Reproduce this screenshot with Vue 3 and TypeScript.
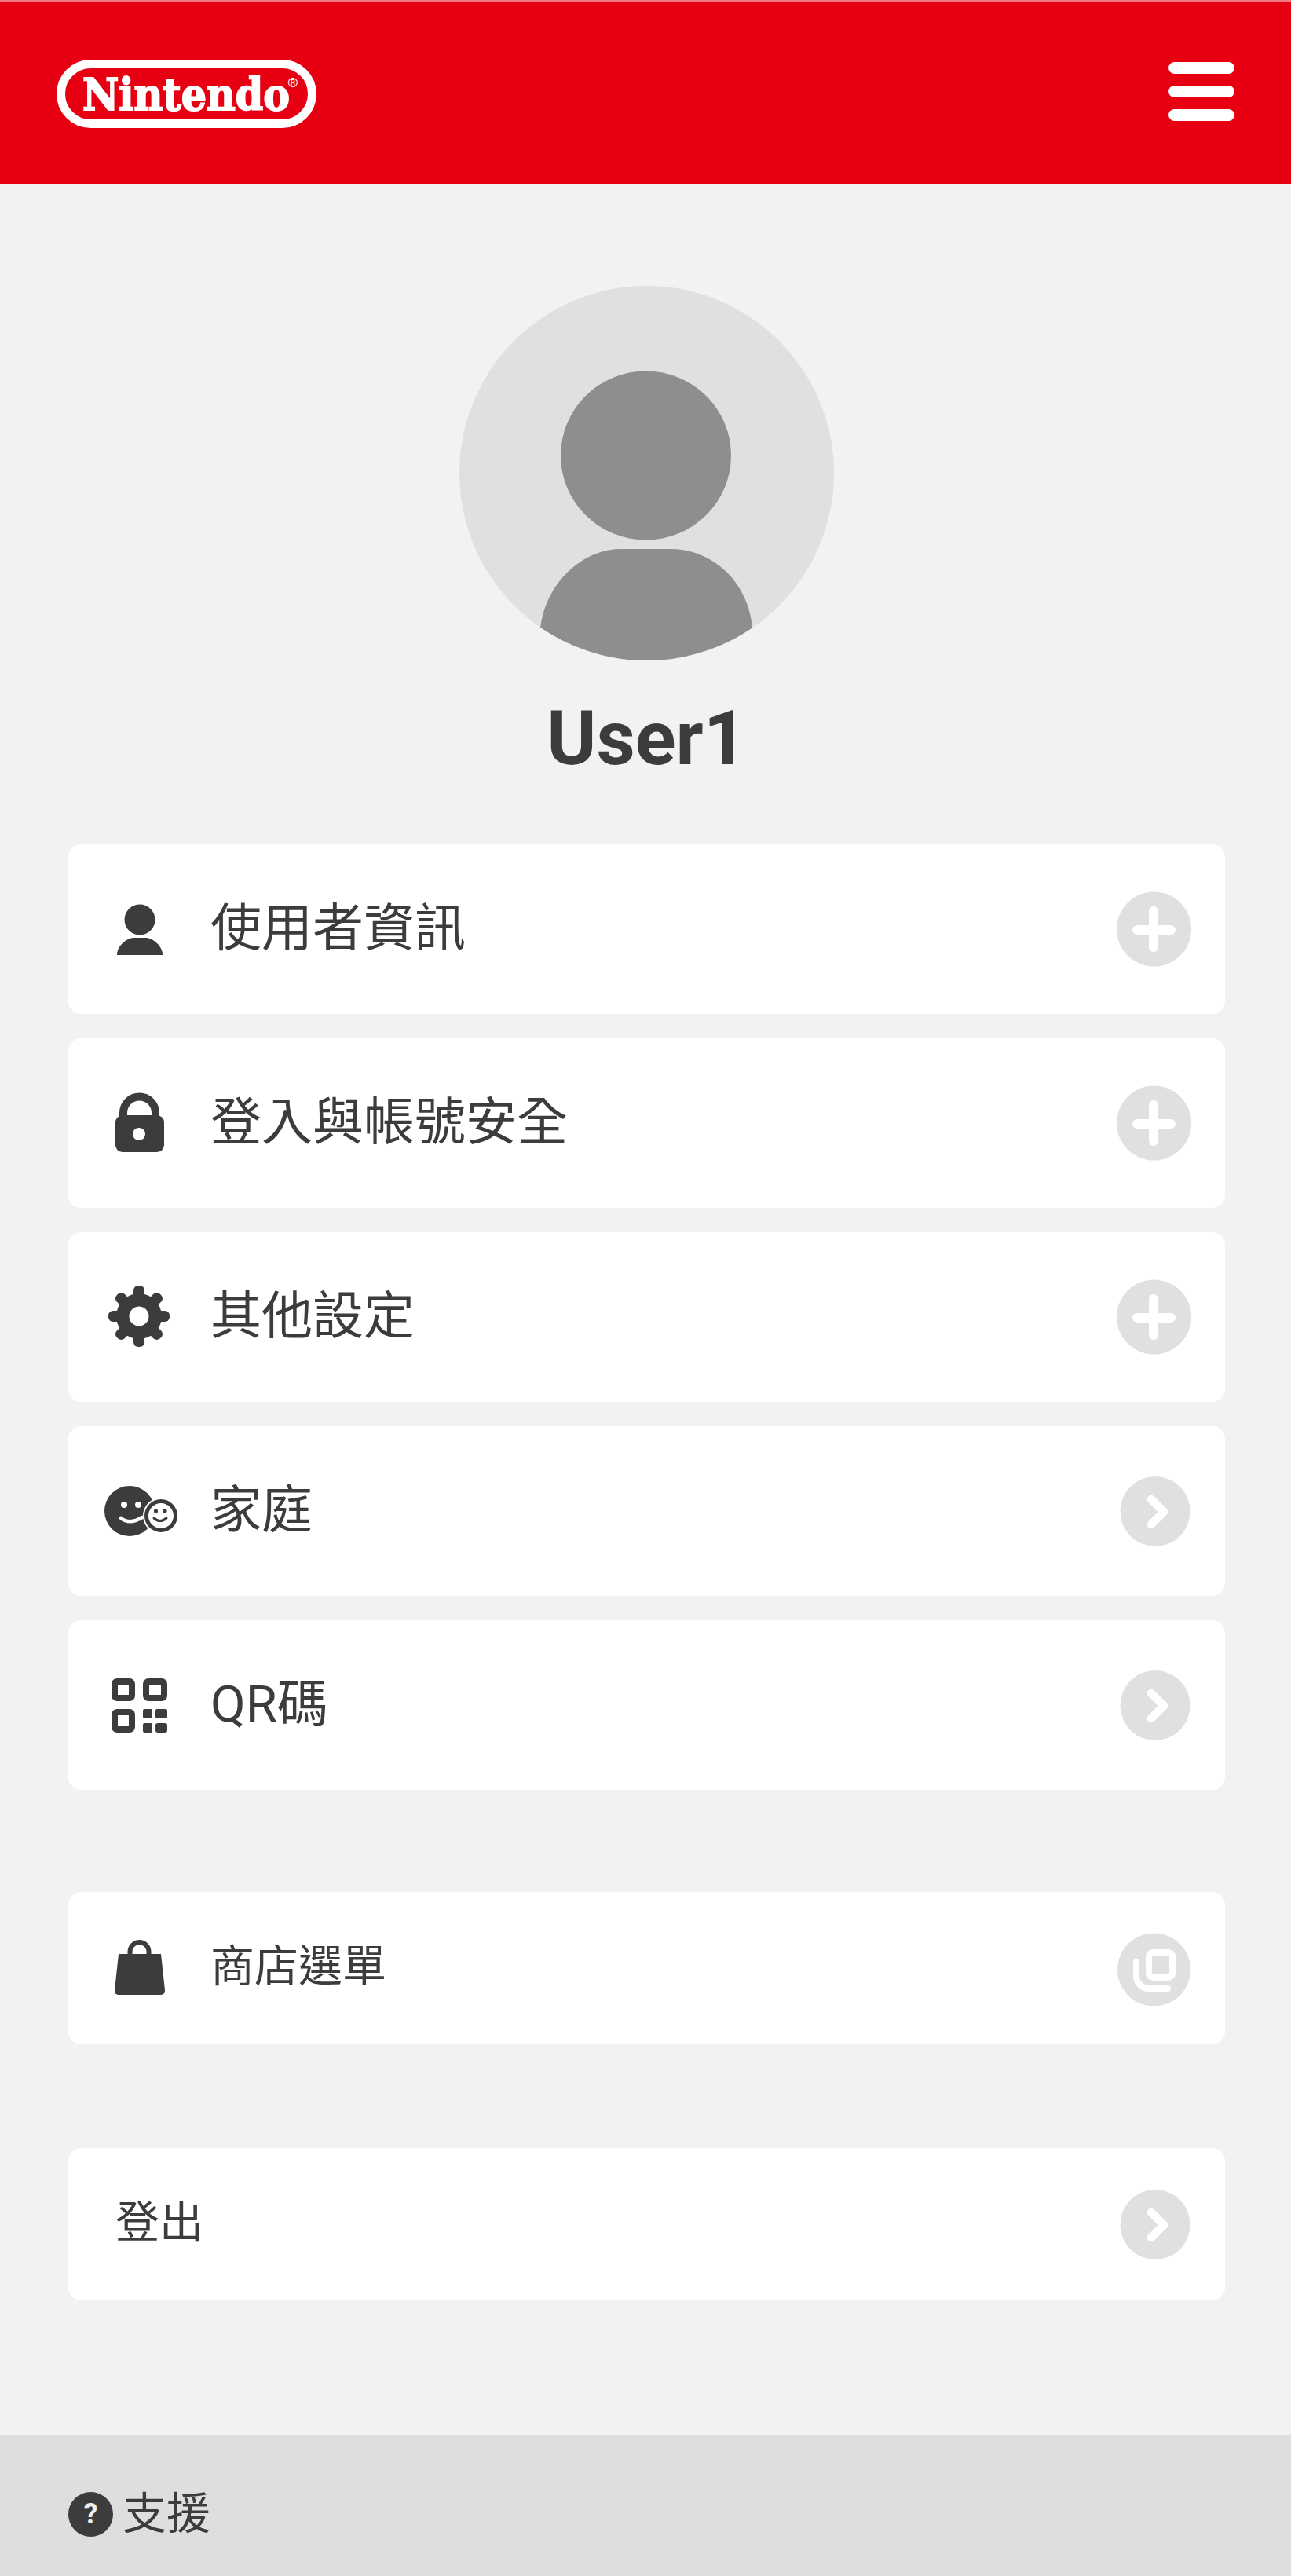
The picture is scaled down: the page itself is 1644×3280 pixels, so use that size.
<script setup lang="ts">
type Row = { label: string; icon?: string; trail: "plus" | "arrow" | "copy"; small?: boolean };

const mainRows: Row[] = [
  { label: "使用者資訊", icon: "person", trail: "plus" },
  { label: "登入與帳號安全", icon: "lock", trail: "plus" },
  { label: "其他設定", icon: "gear", trail: "plus" },
  { label: "家庭", icon: "family", trail: "arrow" },
  { label: "QR碼", icon: "qr", trail: "arrow" },
];
const shopRow: Row = { label: "商店選單", icon: "bag", trail: "copy", small: true };
const logoutRow: Row = { label: "登出", trail: "arrow", small: true };
const groups: Row[][] = [mainRows, [shopRow], [logoutRow]];

const gearAngles = [0, 45, 90, 135, 180, 225, 270, 315];
</script>

<template>
  <div class="page">
    <header class="top">
      <svg class="logo" viewBox="0 0 331 87" width="331" height="87" aria-label="Nintendo">
        <rect x="5.5" y="5.5" width="320" height="76" rx="38" fill="none" stroke="#fff" stroke-width="11" />
        <text x="33" y="64" class="logo-word" textLength="264" lengthAdjust="spacingAndGlyphs">Nintendo</text>
        <text x="301" y="35" class="logo-r" text-anchor="middle">®</text>
      </svg>
      <div class="burger"><span></span><span></span><span></span></div>
    </header>

    <main class="content">
      <svg class="avatar" viewBox="0 0 477 477" width="477" height="477">
        <defs>
          <clipPath id="avatar-clip"><circle cx="238.5" cy="238.5" r="238.5" /></clipPath>
        </defs>
        <circle cx="238.5" cy="238.5" r="238.5" fill="#e0e0e0" />
        <g clip-path="url(#avatar-clip)" fill="#8e8e8e">
          <ellipse cx="237.5" cy="216" rx="108.5" ry="107.5" />
          <path d="M100 500 L103 436 C110 375 160 335 205 335 L270 335 C320 335 368 375 373 436 L376 500 Z" />
        </g>
      </svg>
      <h1 class="name">User1</h1>

      <div v-for="(group, i) in groups" :key="i" class="group">
        <a v-for="row in group" :key="row.label" class="card" :class="{ small: row.small, bare: !row.icon }">
          <svg v-if="row.icon" class="lead" viewBox="0 0 120 96" width="120" height="96">
            <g v-if="row.icon === 'person'" fill="#3c3c3c">
              <circle cx="60" cy="36" r="19.5" />
              <path d="M31 81 C31 68 45 59 52 59 H68 C75 59 89 68 89 81 Z" />
            </g>
            <g v-else-if="row.icon === 'lock'">
              <path d="M39 40 V35 a20.5 20.5 0 0 1 41 0 V40" fill="none" stroke="#3c3c3c" stroke-width="10" />
              <rect x="29" y="38" width="62" height="47" rx="9" fill="#3c3c3c" />
              <circle cx="59" cy="62" r="8" fill="#fff" />
            </g>
            <g v-else-if="row.icon === 'gear'" fill="#3c3c3c">
              <rect
                v-for="a in gearAngles"
                :key="a"
                x="52"
                y="8"
                width="14"
                height="24"
                rx="6"
                :transform="`rotate(${a} 59 47)`"
              />
              <circle cx="59" cy="47" r="29" />
              <circle cx="59" cy="47" r="12.5" fill="#fff" />
            </g>
            <g v-else-if="row.icon === 'family'">
              <circle cx="47" cy="48" r="32" fill="#3c3c3c" />
              <circle cx="40" cy="40" r="4" fill="#fff" />
              <circle cx="58" cy="40" r="4" fill="#fff" />
              <path d="M36 57 Q47 66 63 56" fill="none" stroke="#fff" stroke-width="4.5" stroke-linecap="round" />
              <circle cx="87" cy="54" r="23" fill="#fff" />
              <circle cx="87" cy="54" r="18.5" fill="#fff" stroke="#3c3c3c" stroke-width="5" />
              <circle cx="80.5" cy="48" r="2.6" fill="#3c3c3c" />
              <circle cx="92" cy="48" r="2.6" fill="#3c3c3c" />
              <path d="M78 57 Q86 64 94 57" fill="none" stroke="#3c3c3c" stroke-width="3" stroke-linecap="round" />
            </g>
            <g v-else-if="row.icon === 'qr'">
              <g fill="none" stroke="#3c3c3c" stroke-width="8">
                <rect x="28" y="18" width="22" height="21" rx="3" />
                <rect x="68" y="18" width="23" height="21" rx="3" />
                <rect x="28" y="57" width="22" height="22" rx="3" />
              </g>
              <g fill="#3c3c3c">
                <rect x="64" y="53" width="12" height="12" rx="2" />
                <rect x="80" y="53" width="15" height="12" rx="2" />
                <rect x="64" y="71" width="12" height="12" rx="2" />
                <rect x="80" y="71" width="15" height="12" rx="3" />
              </g>
            </g>
            <g v-else-if="row.icon === 'bag'">
              <path d="M47.5 31 V27 a12 12 0 0 1 24 0 V31" fill="none" stroke="#3c3c3c" stroke-width="6" />
              <path d="M33 30 H87 L92 76 Q92.5 82 86 82 H34 Q27.5 82 28 76 Z" fill="#3c3c3c" />
            </g>
          </svg>

          <span class="label">{{ row.label }}</span>

          <svg class="trail" viewBox="0 0 96 96" width="96" height="96">
            <g v-if="row.trail === 'plus'">
              <circle cx="47.5" cy="48" r="47.5" fill="#e0e0e0" />
              <path d="M26 49 H69 M47 25 V71" fill="none" stroke="#fff" stroke-width="12" stroke-linecap="round" />
            </g>
            <g v-else-if="row.trail === 'arrow'">
              <circle cx="49" cy="48.5" r="44.5" fill="#e0e0e0" />
              <path
                d="M44 33 L60 49 L44 65"
                fill="none"
                stroke="#fff"
                stroke-width="10.5"
                stroke-linecap="round"
                stroke-linejoin="round"
              />
            </g>
            <g v-else>
              <circle cx="47.5" cy="50" r="46.5" fill="#e0e0e0" />
              <rect x="41" y="28" width="30" height="32" rx="5" fill="none" stroke="#fff" stroke-width="8" />
              <path d="M25 40 V58 a16 16 0 0 0 16 16 H65" fill="none" stroke="#fff" stroke-width="8" stroke-linecap="round" />
            </g>
          </svg>
        </a>
      </div>
    </main>

    <footer class="foot">
      <span class="help">?</span>
      <span class="foot-text">支援</span>
    </footer>
  </div>
</template>

<style scoped>
.page {
  display: flex;
  flex-direction: column;
  min-height: 3280px;
  background: #f2f2f2;
  color: #3c3c3c;
  font-family: Roboto, "Noto Sans CJK TC", sans-serif;
}
.top {
  box-sizing: border-box;
  height: 234px;
  padding: 0 72px;
  display: flex;
  align-items: center;
  justify-content: space-between;
  background: #e60012;
  border-top: 2px solid #ee7a82;
}
.logo {
  display: block;
  margin-top: 3px;
}
.logo-word {
  font-family: "DejaVu Serif", serif;
  font-weight: 700;
  font-size: 56px;
  fill: #fff;
  stroke: #fff;
  stroke-width: 2px;
}
.logo-r {
  font-family: Roboto, sans-serif;
  font-size: 17px;
  fill: #fff;
}
.burger {
  width: 84px;
  display: flex;
  flex-direction: column;
  gap: 15px;
  margin-bottom: 3px;
}
.burger span {
  height: 15px;
  border-radius: 8px;
  background: #fff;
}
.content {
  flex: 1;
  padding: 130px 84px 0 87px;
  display: flex;
  flex-direction: column;
  align-items: stretch;
}
.avatar {
  display: block;
  align-self: center;
}
.name {
  margin: 43px 0 79px;
  font-size: 96px;
  line-height: 112px;
  font-weight: 700;
  text-align: center;
}
.group {
  display: flex;
  flex-direction: column;
  gap: 31px;
  margin-bottom: 130px;
}
.group:nth-of-type(2) {
  margin-bottom: 132px;
}
.card {
  box-sizing: border-box;
  height: 216px;
  padding: 0 42px 0 31px;
  display: flex;
  align-items: center;
  background: #fff;
  border-radius: 16px;
}
.card.small {
  height: 194px;
}
.card.bare {
  padding-left: 60px;
}
.lead {
  flex: none;
  margin-right: 30px;
}
.trail {
  flex: none;
  margin-left: auto;
}
.label {
  font-size: 65px;
  line-height: 80px;
  margin-top: -3px;
}
.small .label {
  font-size: 56px;
  margin-top: -5px;
}
.foot {
  box-sizing: border-box;
  height: 179px;
  padding: 21px 0 0 87px;
  display: flex;
  align-items: center;
  gap: 12px;
  background: #dedede;
}
.help {
  width: 57px;
  height: 57px;
  border-radius: 50%;
  background: #3c3c3c;
  color: #eee;
  font-size: 36px;
  font-weight: 700;
  line-height: 57px;
  text-align: center;
}
.foot-text {
  font-size: 56px;
  line-height: 70px;
}
</style>

<style>
html,
body {
  background: #f2f2f2;
}
</style>
